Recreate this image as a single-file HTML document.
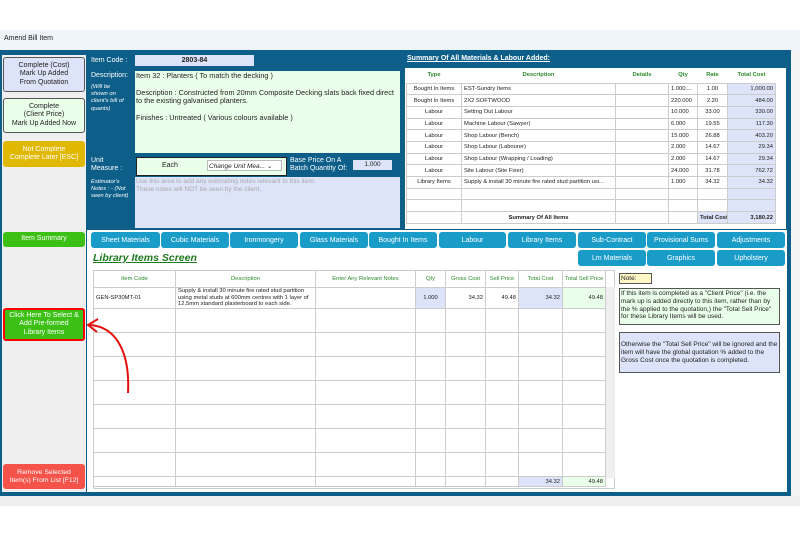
<!DOCTYPE html>
<html><head><style>
*{box-sizing:border-box;margin:0;padding:0}
body{width:800px;height:540px;background:#fff;font-family:"Liberation Sans",sans-serif;position:relative;overflow:hidden;font-size:7px;color:#222}
.a{position:absolute}
.btn{position:absolute;border-radius:3px;text-align:center;display:flex;align-items:center;justify-content:center;line-height:1.15}
.tab{position:absolute;height:16px;background:#1a9cc9;color:#fff;border-radius:3px;font-size:7px;display:flex;align-items:center;justify-content:center}
table{border-collapse:collapse;position:absolute;table-layout:fixed}
td{border:1px solid #ccc;font-size:5.8px;overflow:hidden;white-space:nowrap;padding:0 2px}
.w{color:#fff}
</style></head><body>
<div class="a" style="left:0;top:30px;width:800px;height:20px;background:#eef4fa;font-size:7px;padding:5px 4px">Amend Bill Item</div>
<div class="a" style="left:0;top:50px;width:791px;height:446px;background:#0d5f89"></div>
<div class="a" style="left:2px;top:55px;width:84px;height:437px;background:#efefef"></div>
<div class="a" style="left:87px;top:230px;width:700px;height:262px;background:#fff"></div>
<div class="a" style="left:791px;top:50px;width:9px;height:446px;background:#f4f4f4"></div>
<div class="a" style="left:0;top:496px;width:800px;height:10px;background:#efefef"></div>

<div class="btn" style="left:3px;top:57px;width:82px;height:35px;background:#dde3f8;border:1px solid #555;font-size:7px">Complete (Cost)<br>Mark Up Added<br>From Quotation</div>
<div class="btn" style="left:3px;top:98px;width:82px;height:35px;background:#eaffea;border:1px solid #555;font-size:7px">Complete<br>(Client Price)<br>Mark Up Added Now</div>
<div class="btn w" style="left:3px;top:141px;width:82px;height:26px;background:#e0b800;font-size:7px">Not Complete<br>Complete Later [ESC]</div>
<div class="btn w" style="left:3px;top:232px;width:82px;height:15px;background:#3cc016;font-size:7px">Item Summary</div>
<div class="btn w" style="left:3px;top:308px;width:82px;height:33px;background:#3cc016;border:2px solid #f00;font-size:7px">Click Here To Select &amp;<br>Add Pre-formed<br>Library Items</div>
<div class="btn w" style="left:3px;top:464px;width:82px;height:25px;background:#f5524a;font-size:6.8px">Remove Selected<br>Item(s) From List [F12]</div>

<div class="a w" style="left:91px;top:57px;font-size:7px">Item Code :</div>
<div class="a" style="left:135px;top:55px;width:119px;height:11px;background:#dde3f8;text-align:center;font-weight:bold;font-size:7px;line-height:11px">2803-84</div>
<div class="a w" style="left:91px;top:72px;font-size:7px">Description:</div>
<div class="a w" style="left:91px;top:84px;font-size:5.8px;font-style:italic;line-height:1.25">(Will be<br>shown on<br>client's bill of<br>quants)</div>
<div class="a" style="left:135px;top:71px;width:265px;height:82px;background:#eaffea;padding:1px;font-size:7.3px;line-height:1.15">Item 32 : Planters ( To match the decking )<br><br>Description : Constructed from 20mm Composite Decking slats back fixed direct to the existing galvanised planters.<br><br>Finishes : Untreated ( Various colours available )</div>
<div class="a w" style="left:91px;top:157px;font-size:7px;line-height:1.2">Unit<br>Measure :</div>
<div class="a" style="left:136px;top:157px;width:151px;height:19px;background:#eaffea;border:1px solid #222"></div>
<div class="a" style="left:162px;top:162px;font-size:7px">Each</div>
<div class="a" style="left:207px;top:160px;width:75px;height:11px;background:#fff;border:1px solid #bbb;font-size:6.5px;font-style:italic;padding:1px">Change Unit Mea... ⌄</div>
<div class="a w" style="left:290px;top:157px;font-size:7px;line-height:1.2">Base Price On A<br>Batch Quantity Of:</div>
<div class="a" style="left:353px;top:160px;width:39px;height:10px;background:#dde3f8;text-align:center;font-size:6.5px;line-height:10px">1.000</div>
<div class="a w" style="left:91px;top:179px;font-size:5.8px;font-style:italic;line-height:1.25">Estimator's<br>Notes : - (Not<br>seen by client)</div>
<div class="a" style="left:135px;top:177px;width:265px;height:51px;background:#dde3f8;color:#aaa;font-size:6.5px;padding:1px;line-height:1.2">Use this area to add any estimating notes relevant to this item.<br>These notes will NOT be seen by the client.</div>

<div class="a w" style="left:407px;top:55px;font-size:7px;font-weight:bold;text-decoration:underline">Summary Of All Materials &amp; Labour Added:</div>
<div class="a" style="left:405px;top:68px;width:381px;height:161px;background:#fff"></div>
<table style="left:406px;top:68px;width:369px">
<colgroup><col style="width:55px"><col style="width:154px"><col style="width:53px"><col style="width:29px"><col style="width:30px"><col style="width:48px"></colgroup>
<tr style="height:15px;color:#2a8a2a;font-weight:bold;text-align:center"><td style="border:none">Type</td><td style="border:none">Description</td><td style="border:none">Details</td><td style="border:none">Qty</td><td style="border:none">Rate</td><td style="border:none">Total Cost</td></tr>
<tr style="height:11.7px"><td style="text-align:center">Bought In Items</td><td>EST-Sundry Items</td><td></td><td>1.000....</td><td style="text-align:center">1.00</td><td style="text-align:right;background:#dde3f8">1,000.00</td></tr>
<tr style="height:11.7px"><td style="text-align:center">Bought In Items</td><td>2X2 SOFTWOOD</td><td></td><td>220.000</td><td style="text-align:center">2.20</td><td style="text-align:right;background:#dde3f8">484.00</td></tr>
<tr style="height:11.7px"><td style="text-align:center">Labour</td><td>Setting Out Labour</td><td></td><td>10.000</td><td style="text-align:center">33.00</td><td style="text-align:right;background:#dde3f8">330.00</td></tr>
<tr style="height:11.7px"><td style="text-align:center">Labour</td><td>Machine Labour (Sawyer)</td><td></td><td>6.000</td><td style="text-align:center">19.55</td><td style="text-align:right;background:#dde3f8">117.30</td></tr>
<tr style="height:11.7px"><td style="text-align:center">Labour</td><td>Shop Labour (Bench)</td><td></td><td>15.000</td><td style="text-align:center">26.88</td><td style="text-align:right;background:#dde3f8">403.20</td></tr>
<tr style="height:11.7px"><td style="text-align:center">Labour</td><td>Shop Labour (Labourer)</td><td></td><td>2.000</td><td style="text-align:center">14.67</td><td style="text-align:right;background:#dde3f8">29.34</td></tr>
<tr style="height:11.7px"><td style="text-align:center">Labour</td><td>Shop Labour (Wrapping / Loading)</td><td></td><td>2.000</td><td style="text-align:center">14.67</td><td style="text-align:right;background:#dde3f8">29.34</td></tr>
<tr style="height:11.7px"><td style="text-align:center">Labour</td><td>Site Labour (Site Fixer)</td><td></td><td>24.000</td><td style="text-align:center">31.78</td><td style="text-align:right;background:#dde3f8">762.72</td></tr>
<tr style="height:11.7px"><td style="text-align:center">Library Items</td><td>Supply &amp; install 30 minute fire rated stud partition usi...</td><td></td><td>1.000</td><td style="text-align:center">34.32</td><td style="text-align:right;background:#dde3f8">34.32</td></tr>
<tr style="height:11.7px"><td></td><td></td><td></td><td></td><td></td><td style="background:#dde3f8"></td></tr>
<tr style="height:11.7px"><td></td><td></td><td></td><td></td><td></td><td style="background:#dde3f8"></td></tr>
<tr style="height:12px;font-weight:bold"><td></td><td style="text-align:center">Summary Of All Items</td><td></td><td></td><td style="background:#dde3f8">Total Cost</td><td style="text-align:right;background:#dde3f8">3,180.22</td></tr>
</table>

<div class="tab" style="left:91px;top:232px;width:69px">Sheet Materials</div>
<div class="tab" style="left:161px;top:232px;width:68px">Cubic Materials</div>
<div class="tab" style="left:230px;top:232px;width:68px">Ironmongery</div>
<div class="tab" style="left:300px;top:232px;width:68px">Glass Materials</div>
<div class="tab" style="left:369px;top:232px;width:68px">Bought In Items</div>
<div class="tab" style="left:439px;top:232px;width:67px">Labour</div>
<div class="tab" style="left:508px;top:232px;width:68px">Library Items</div>
<div class="tab" style="left:578px;top:232px;width:68px">Sub-Contract</div>
<div class="tab" style="left:647px;top:232px;width:68px">Provisional Sums</div>
<div class="tab" style="left:717px;top:232px;width:68px">Adjustments</div>
<div class="tab" style="left:578px;top:250px;width:68px">Lm Materials</div>
<div class="tab" style="left:647px;top:250px;width:68px">Graphics</div>
<div class="tab" style="left:717px;top:250px;width:68px">Upholstery</div>
<div class="a" style="left:93px;top:252px;font-size:10.5px;font-weight:bold;font-style:italic;color:#1e7a1e;text-decoration:underline">Library Items Screen</div>

<div class="a" style="left:93px;top:270px;width:522px;height:219px;border:1px solid #ccc;background:#fff"></div>
<div class="a" style="left:605px;top:287px;width:10px;height:191px;background:#efefef"></div>
<table style="left:93px;top:270px;width:512px">
<colgroup><col style="width:82px"><col style="width:140px"><col style="width:100px"><col style="width:30px"><col style="width:40px"><col style="width:33px"><col style="width:44px"><col style="width:43px"></colgroup>
<tr style="height:17px;color:#2a8a2a;text-align:center"><td>Item Code</td><td>Description</td><td>Enter Any Relevant Notes</td><td>Qty</td><td>Gross Cost</td><td>Sell Price</td><td>Total Cost</td><td>Total Sell Price</td></tr>
<tr style="height:21px"><td>GEN-SP30MT-01</td><td style="white-space:normal;line-height:1.15">Supply &amp; install 30 minute fire rated stud partition using metal studs at 600mm centres with 1 layer of 12.5mm standard plasterboard to each side.</td><td></td><td style="background:#dde3f8;text-align:center">1.000</td><td style="text-align:right">34.32</td><td style="text-align:right">49.48</td><td style="text-align:right;background:#dde3f8">34.32</td><td style="text-align:right;background:#eaffea">49.48</td></tr>
<tr style="height:24px"><td></td><td></td><td></td><td></td><td></td><td></td><td></td><td></td></tr>
<tr style="height:24px"><td></td><td></td><td></td><td></td><td></td><td></td><td></td><td></td></tr>
<tr style="height:24px"><td></td><td></td><td></td><td></td><td></td><td></td><td></td><td></td></tr>
<tr style="height:24px"><td></td><td></td><td></td><td></td><td></td><td></td><td></td><td></td></tr>
<tr style="height:24px"><td></td><td></td><td></td><td></td><td></td><td></td><td></td><td></td></tr>
<tr style="height:24px"><td></td><td></td><td></td><td></td><td></td><td></td><td></td><td></td></tr>
<tr style="height:24px"><td></td><td></td><td></td><td></td><td></td><td></td><td></td><td></td></tr>
<tr style="height:10px"><td></td><td></td><td></td><td></td><td></td><td></td><td style="text-align:right;background:#dde3f8">34.32</td><td style="text-align:right;background:#eaffea">49.48</td></tr>
</table>

<div class="a" style="left:619px;top:273px;width:33px;height:11px;background:#fff8c4;border:1px solid #555;font-size:6.5px;padding:1px">Note:</div>
<div class="a" style="left:619px;top:288px;width:161px;height:37px;background:#eaffea;border:1px solid #555;font-size:6.5px;padding:1px;line-height:1.2">If this item is completed as a "Client Price" (i.e. the mark up is added directly to this item, rather than by the % applied to the quotation,) the "Total Sell Price" for these Library Items will be used.</div>
<div class="a" style="left:619px;top:332px;width:161px;height:41px;background:#dde3f8;border:1px solid #555;font-size:6.5px;padding:8px 1px 1px;line-height:1.2">Otherwise the "Total Sell Price" will be ignored and the item will have the global quotation % added to the Gross Cost once the quotation is completed.</div>

<svg class="a" style="left:80px;top:315px;z-index:5" width="60" height="80"><path d="M48 78 C50 40 38 12 10 10" fill="none" stroke="#e41010" stroke-width="2"/><path d="M18 4 L8 10 L17 17" fill="none" stroke="#e41010" stroke-width="2"/></svg>
</body></html>
